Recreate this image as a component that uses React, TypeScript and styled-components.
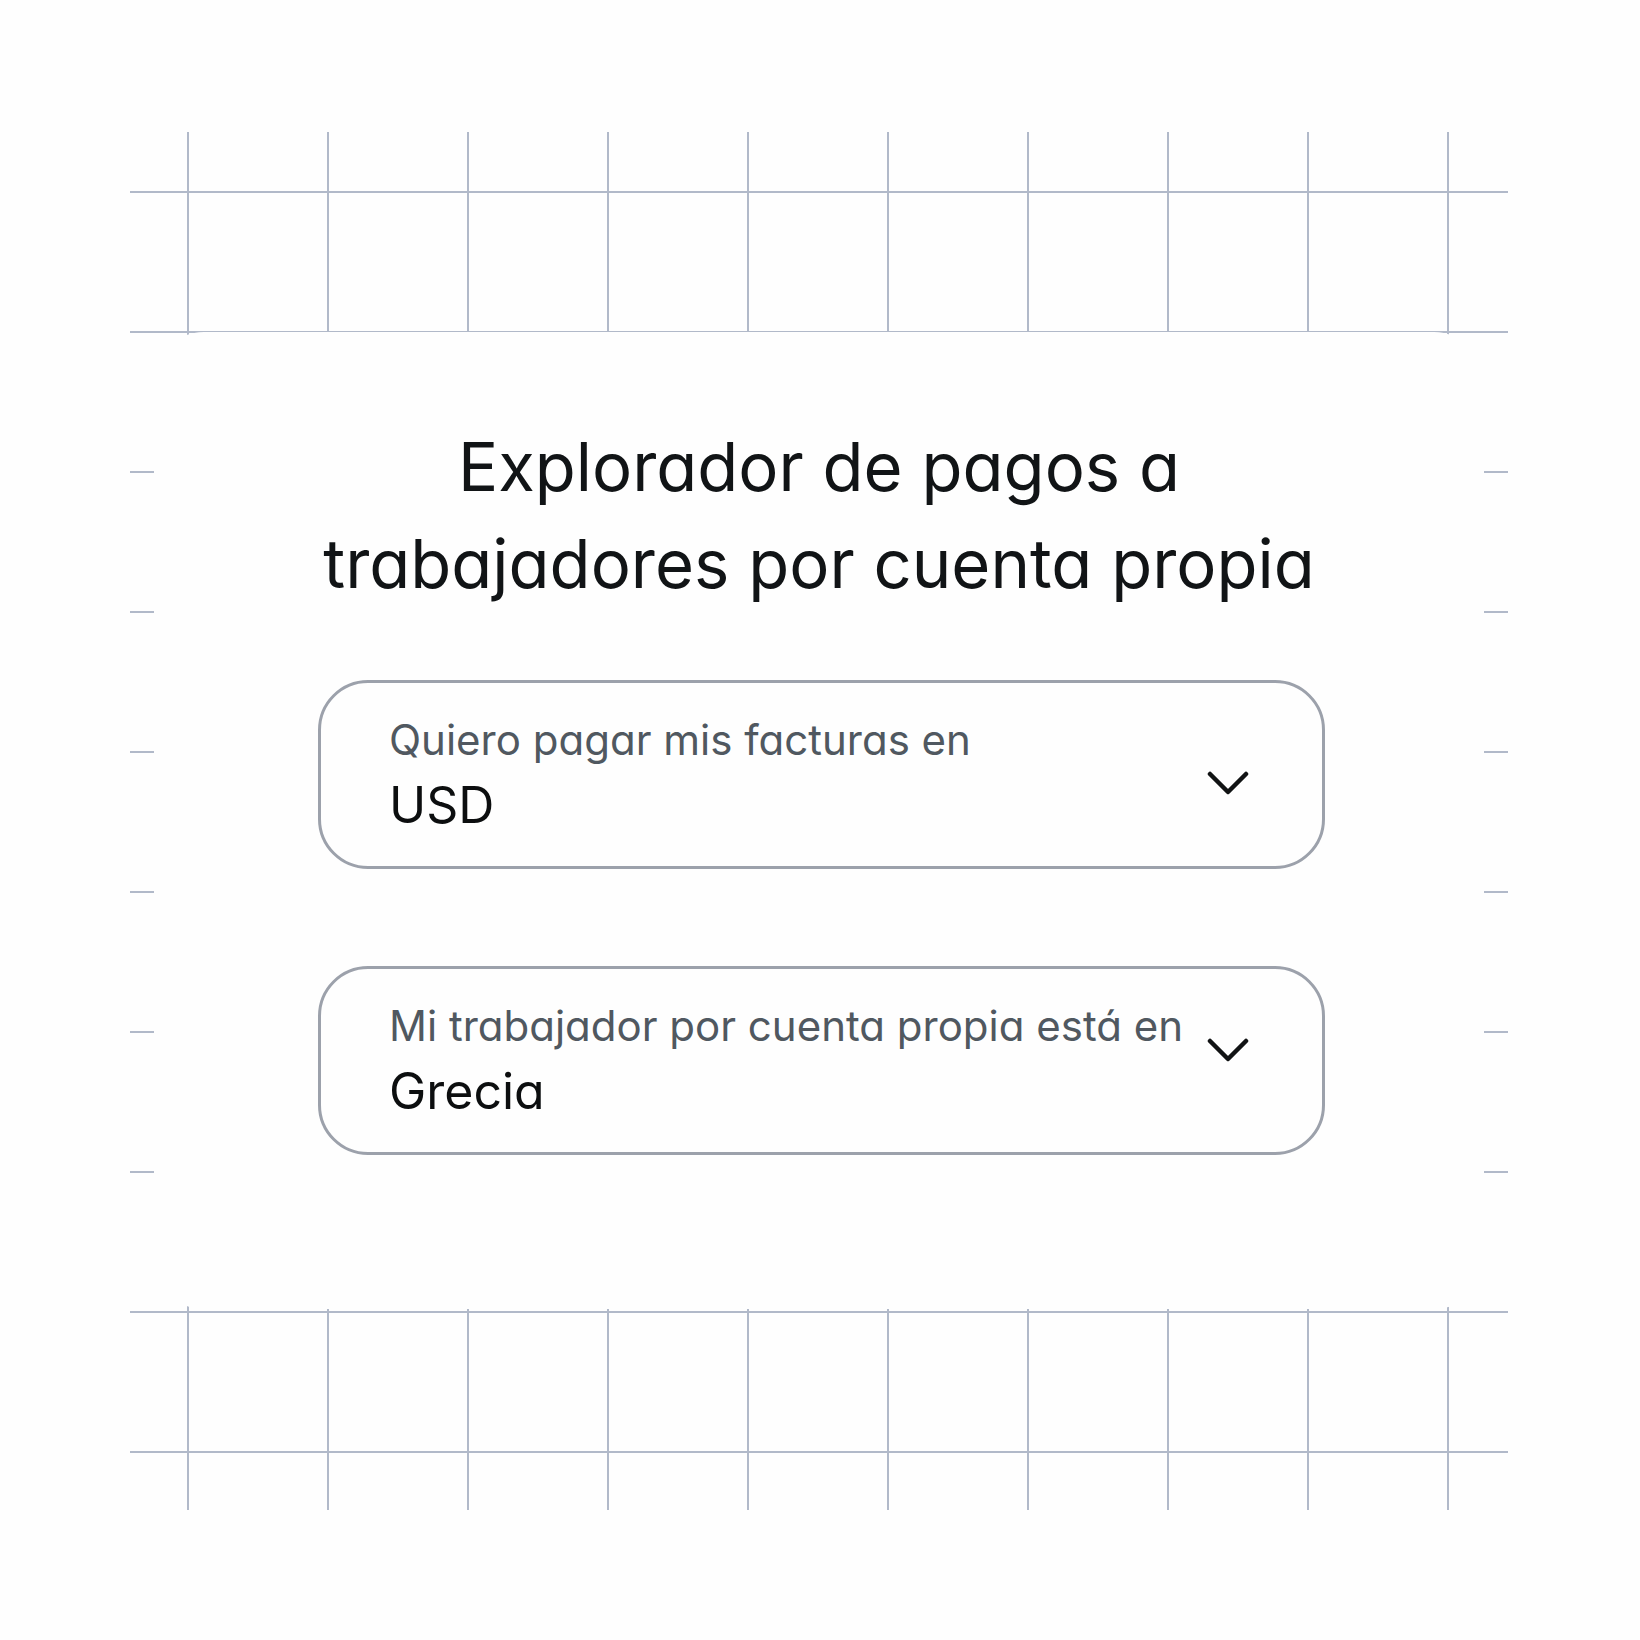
import React, { useId, useState } from "react";
import styled, { createGlobalStyle } from "styled-components";

const GlobalStyle = createGlobalStyle`
  *, *::before, *::after { box-sizing: border-box; }
  body {
    margin: 0;
    background: #fefefe;
    color: #111416;
    font-family: Inter, "Liberation Sans", sans-serif;
    font-feature-settings: "cv11" 1;
  }
`;

const Page = styled.main`
  padding: 132px 132px 130px 130px;
`;

const GridPaper = styled.div`
  padding: 200px 24px 201px;
  background-image:
    linear-gradient(to right, #b1b9c9 2px, transparent 2px),
    linear-gradient(to bottom, #b1b9c9 2px, transparent 2px);
  background-size: 140px 140px;
  background-position: 57px 59px;
`;

const Card = styled.section`
  display: flex;
  flex-direction: column;
  gap: 68px;
  padding: 86px 0 154px;
  border-radius: 50px;
  background: #fefefe;
`;

const Title = styled.h1`
  margin: 0;
  font-size: 67px;
  font-weight: 400;
  line-height: 97px;
  text-align: center;
`;

const Fields = styled.form`
  display: flex;
  flex-direction: column;
  gap: 97px;
  padding: 0 159px 0 164px;
`;

const FieldBox = styled.div`
  position: relative;
  display: flex;
  flex-direction: column;
  height: 189px;
  padding: 33px 68px 0;
  border: 3px solid #9ca1ab;
  border-radius: 50px;
`;

const FieldLabel = styled.label`
  color: #505860;
  font-size: 42px;
  line-height: 48px;
  white-space: nowrap;
`;

const Select = styled.select`
  width: 100%;
  margin: 0;
  padding: 0;
  border: 0;
  outline: 0;
  appearance: none;
  background: transparent;
  color: #0c0e0f;
  font: inherit;
  font-feature-settings: inherit;
  font-size: 50px;
  line-height: 82px;
  cursor: pointer;
`;

const Chevron = styled.svg<{ $top: number }>`
  position: absolute;
  top: ${(p) => p.$top}px;
  right: 73px;
  width: 42px;
  height: 24px;
  fill: none;
  stroke: #111314;
  stroke-width: 4.5;
  stroke-linecap: round;
  stroke-linejoin: round;
  pointer-events: none;
`;

type FieldProps = { label: string; options: string[]; chevronTop: number };

function SelectField({ label, options, chevronTop }: FieldProps) {
  const id = useId();
  const [value, setValue] = useState(options[0]);
  return (
    <FieldBox>
      <FieldLabel htmlFor={id}>{label}</FieldLabel>
      <Select id={id} value={value} onChange={(e) => setValue(e.target.value)}>
        {options.map((o) => (
          <option key={o}>{o}</option>
        ))}
      </Select>
      <Chevron $top={chevronTop} viewBox="0 0 42 24" aria-hidden="true">
        <path d="M3 3 L21 21 L39 3" />
      </Chevron>
    </FieldBox>
  );
}

export default function App() {
  return (
    <>
      <GlobalStyle />
      <Page>
        <GridPaper>
          <Card>
            <Title>
              Explorador de pagos a<br />
              trabajadores por cuenta propia
            </Title>
            <Fields>
              <SelectField label="Quiero pagar mis facturas en" options={["USD"]} chevronTop={88} />
              <SelectField
                label="Mi trabajador por cuenta propia está en"
                options={["Grecia"]}
                chevronTop={69}
              />
            </Fields>
          </Card>
        </GridPaper>
      </Page>
    </>
  );
}
